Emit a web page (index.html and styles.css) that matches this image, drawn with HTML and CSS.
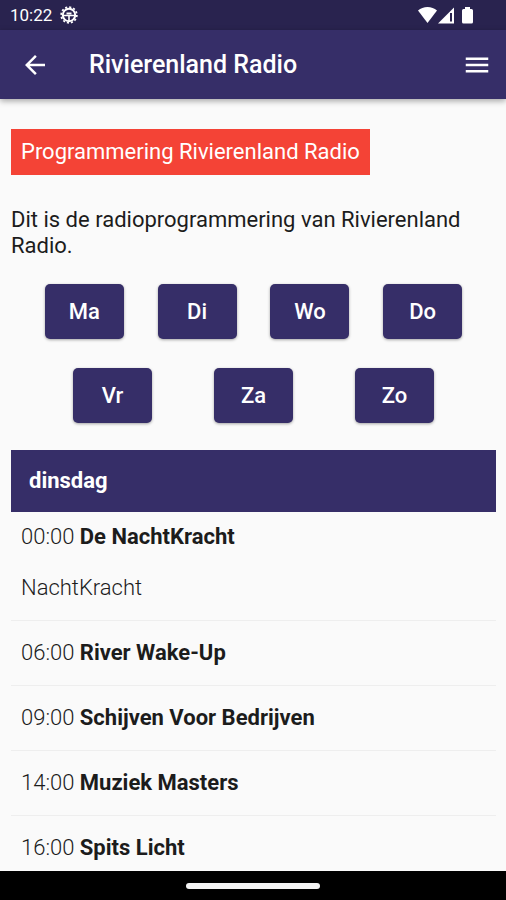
FILE: index.html
```html
<!DOCTYPE html>
<html lang="nl">
<head>
  <meta charset="UTF-8" />
  <meta name="viewport" content="width=device-width, initial-scale=1.0" />
  <title>Rivierenland Radio</title>
  <link rel="stylesheet" href="styles.css">
</head>
<body>
  <div class="status-bar">
    <span>10:22</span>
    <svg class="status-gear" viewBox="0 0 18 18" width="18" height="18">
      <circle cx="9" cy="9" r="6.2" fill="none" stroke="#fff" stroke-width="2" />
      <circle cx="9" cy="9" r="7.8" fill="none" stroke="#fff" stroke-width="1.8" stroke-dasharray="2.1 1.98" />
      <path d="M3 9.500h12M9 9v7" stroke="#fff" stroke-width="1.6" />
      <path d="M6.500 6.500h5v2h-5z" fill="#fff" />
    </svg>
    <svg class="status-icons" viewBox="0 0 56 18" width="56" height="18">
      <path d="M0 4.500C5-.2 14-.2 19 4.500L9.500 17z" fill="#fff" />
      <path d="M20 17.500L36 1.500v16z" fill="#fff" />
      <path d="M32 7h2v8.500h-2z" fill="#29234f" />
      <path d="M47 1h5v2h1.500q1.500 0 1.500 1.500V16q0 1.500-1.500 1.500h-8Q44 17.500 44 16V4.500Q44 3 45.500 3H47z" fill="#fff" />
    </svg>
  </div>

  <header class="app-bar">
    <button class="icon-btn" aria-label="Terug">
      <svg viewBox="0 0 24 24" width="30" height="30">
        <path d="M20 11H7.830l5.590-5.590L12 4l-8 8 8 8 1.410-1.410L7.830 13H20z" fill="#fff" />
      </svg>
    </button>
    <h1>Rivierenland Radio</h1>
    <button class="icon-btn" aria-label="Menu">
      <svg viewBox="0 0 24 24" width="30" height="30">
        <path d="M3 18h18v-2H3zM3 13h18v-2H3zM3 6v2h18V6z" fill="#fff" />
      </svg>
    </button>
  </header>

  <main class="content">
    <h2 class="label">Programmering Rivierenland Radio</h2>
    <p class="intro">Dit is de radioprogrammering van Rivierenland Radio.</p>

    <div class="days">
      <div class="day-row">
        <button class="btn">Ma</button>
        <button class="btn">Di</button>
        <button class="btn">Wo</button>
        <button class="btn">Do</button>
      </div>
      <div class="day-row">
        <button class="btn">Vr</button>
        <button class="btn">Za</button>
        <button class="btn">Zo</button>
      </div>
    </div>

    <h3 class="day-title">dinsdag</h3>
    <ul class="programs">
      <li>
        <p>00:00 <strong>De NachtKracht</strong></p>
        <p class="description">NachtKracht</p>
      </li>
      <li><p>06:00 <strong>River Wake-Up</strong></p></li>
      <li><p>09:00 <strong>Schijven Voor Bedrijven</strong></p></li>
      <li><p>14:00 <strong>Muziek Masters</strong></p></li>
      <li><p>16:00 <strong>Spits Licht</strong></p></li>
    </ul>
  </main>

  <div class="nav-bar">
    <div class="nav-handle"></div>
  </div>
</body>
</html>
```
FILE: styles.css
```css
* {
  box-sizing: border-box;
}
body {
  display: flex;
  flex-direction: column;
  height: 100vh;
  margin: 0;
  background: #fafafa;
  color: #1c1c1c;
  font-family: Roboto, sans-serif;
  font-size: 22px;
  line-height: 26px;
}
h1, h2, h3, p, ul {
  margin: 0;
  padding: 0;
}
.status-bar {
  display: flex;
  flex: none;
  align-items: center;
  gap: 8px;
  height: 30px;
  padding: 0 32px 0 10px;
  background: #29234f;
  color: #fff;
  font-size: 17px;
}
.status-icons {
  margin-left: auto;
}
.app-bar {
  display: flex;
  flex: none;
  align-items: center;
  height: 69px;
  padding: 0 14px 0 20px;
  background: #362e68;
  color: #fff;
  box-shadow: 0 2px 6px rgba(0, 0, 0, 0.35);
  z-index: 1;
}
.app-bar h1 {
  flex: 1;
  margin-left: 39px;
  font-size: 25px;
  font-weight: 500;
}
.icon-btn {
  display: flex;
  padding: 0;
  border: none;
  background: none;
  cursor: pointer;
}
.content {
  flex: 1;
  min-height: 0;
  overflow: hidden;
  padding: 30px 10px 0 11px;
}
.label {
  width: fit-content;
  padding: 10px;
  background: #f44336;
  color: #fff;
  font-size: 22px;
  font-weight: 400;
}
.intro {
  margin-top: 32px;
}
.days {
  display: flex;
  flex-direction: column;
  gap: 29px;
  margin: 25px 0 27px;
}
.day-row {
  display: flex;
  justify-content: space-evenly;
}
.btn {
  width: 79px;
  height: 55px;
  padding: 0;
  border: none;
  border-radius: 5px;
  background: #362e68;
  color: #fff;
  font: 500 22px Roboto, sans-serif;
  box-shadow: 0 1px 3px rgba(0, 0, 0, 0.35);
  cursor: pointer;
}
.day-title {
  padding: 18px;
  background: #362e68;
  color: #fff;
  font-size: 22px;
  font-weight: 700;
}
.programs {
  list-style: none;
  font-weight: 300;
}
.programs li {
  padding: 19px 10px;
  border-bottom: 1px solid #eee;
}
.programs li:first-child {
  padding-top: 12px;
}
.programs strong {
  font-weight: 700;
}
.description {
  margin-top: 25px;
}
.nav-bar {
  display: flex;
  flex: none;
  align-items: center;
  justify-content: center;
  height: 29px;
  background: #000;
}
.nav-handle {
  width: 134px;
  height: 6px;
  border-radius: 3px;
  background: #f4f4f4;
}
```
